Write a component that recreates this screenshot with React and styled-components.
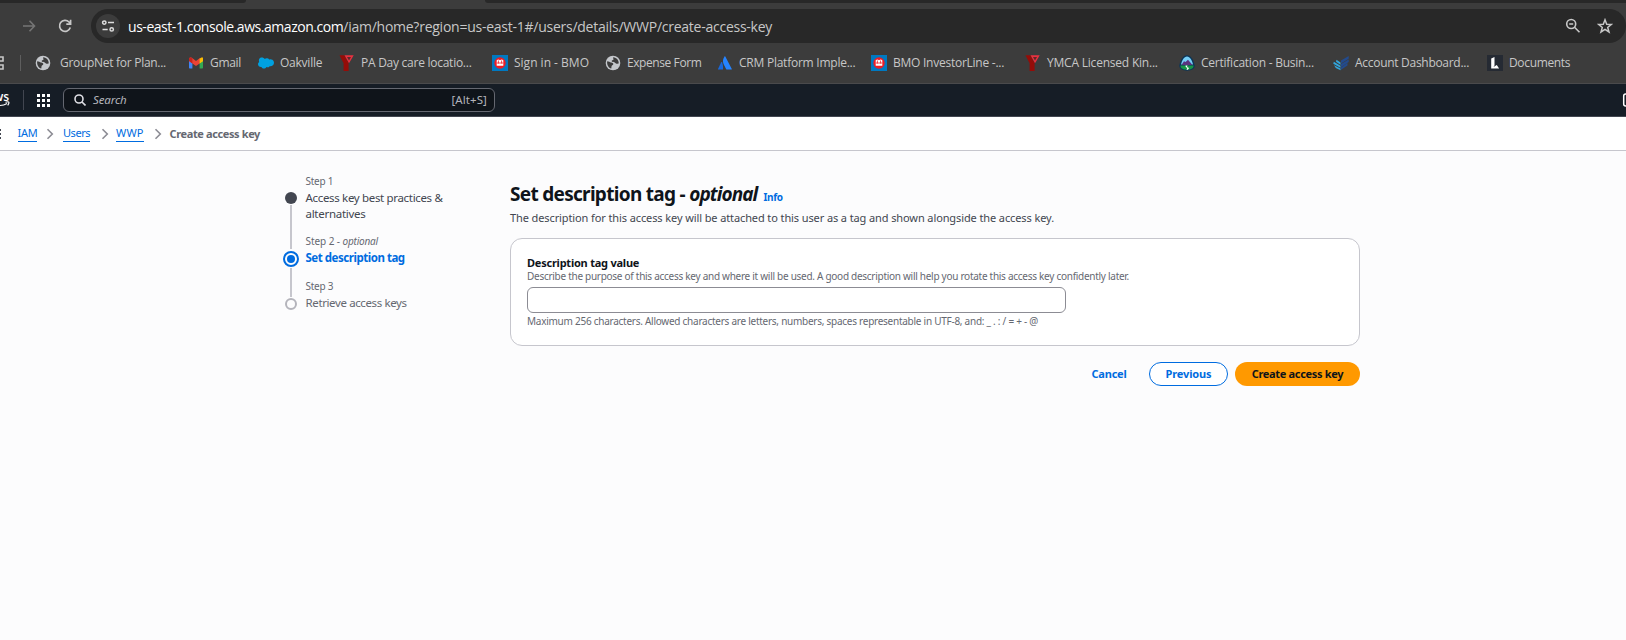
import React from "react";
import styled, { createGlobalStyle } from "styled-components";

const Global = createGlobalStyle`
  *{box-sizing:border-box}
  html,body{margin:0;padding:0;background:#fcfcfd}
  body{font-family:"Noto Sans","Open Sans",sans-serif;overflow:hidden}
  svg{display:block;flex:none}
`;
const Page = styled.div`width:1626px;height:640px;background:#fcfcfd;overflow:hidden;`;
const Text = styled.span`
  font-family:${p => p.$ui ? '"Open Sans",sans-serif' : '"Noto Sans",sans-serif'};
  font-size:${p => p.$size || 12}px;line-height:${p => p.$lh || 16}px;
  font-weight:${p => p.$weight || 400};font-style:${p => p.$italic ? "italic" : "normal"};
  color:${p => p.$color || "inherit"};letter-spacing:${p => p.$ls || 0}px;white-space:pre;
`;
const Chrome = styled.header`height:84px;background:#3c3c3c;border-bottom:1px solid #4a4a4c;overflow:hidden;`;
const Tabs = styled.div`height:3px;display:flex;justify-content:space-between;`;
const TabGap = styled.div`width:${p => p.$w}px;background:#282828;border-radius:${p => p.$r};`;
const Toolbar = styled.div`height:46px;display:flex;align-items:center;padding-left:21px;`;
const ToolIcon = styled.div`width:16px;margin-right:${p => p.$mr}px;`;
const Omnibox = styled.div`flex:1;height:34px;border-radius:17px;background:#282828;display:flex;align-items:center;padding:0 13px 0 5px;`;
const SiteInfo = styled.div`width:24px;height:24px;border-radius:50%;background:#3c3c3c;display:grid;place-items:center;margin-right:8px;`;
const Url = styled.div`flex:1;display:flex;color:#c7c7c7;padding-top:1px;`;
const OmniIcons = styled.div`display:flex;gap:16px;align-items:center;`;
const Bookmarks = styled.nav`height:28px;display:flex;align-items:center;color:#c7c7c7;`;
const Folder = styled.div`width:20px;`;
const BarRule = styled.div`width:1px;height:16px;background:#5e5e5e;margin-right:14px;`;
const Bookmark = styled.div`width:${p => p.$w}px;flex:none;display:flex;align-items:center;gap:${p => p.$gap || 6}px;`;

const Nav = styled.div`height:33px;background:#161d26;border-bottom:1px solid #424650;display:flex;align-items:center;`;
const Logo = styled.div`width:23px;`;
const NavRule = styled.div`width:1px;height:20px;background:#424650;margin-right:13px;`;
const Search = styled.div`width:432px;height:24px;margin-left:13px;border:1px solid #656871;border-radius:6px;background:#0f141a;display:flex;align-items:center;padding:0 7px 0 10px;color:#b4b4bb;`;
const SearchHint = styled.div`flex:1;padding-left:7px;display:flex;`;
const NavEnd = styled.div`margin-left:auto;`;

const Crumbs = styled.nav`height:34px;background:#fff;border-bottom:1px solid #c6c6cd;display:flex;align-items:center;`;
const Crumb = styled.a`width:${p => p.$w}px;flex:none;display:flex;`;
const CrumbText = styled(Text)`border-bottom:${p => p.$link ? "1px solid #006ce0" : "0"};`;
const MenuStub = styled.div`width:17.5px;`;

const Body = styled.main`display:flex;padding:22px 0 0 283px;`;
const Steps = styled.ol`width:227px;flex:none;margin:0;padding:0;list-style:none;`;
const Step = styled.li`display:flex;height:${p => p.$h}px;`;
const Track = styled.div`width:16px;flex:none;margin-right:6.5px;display:flex;flex-direction:column;align-items:center;padding-top:${p => p.$top}px;`;
const Dot = styled.i`
  flex:none;border-radius:50%;width:${p => p.$s}px;height:${p => p.$s}px;
  border:${p => p.$border || "0"};background:${p => p.$bg || "transparent"};
  display:grid;place-items:center;
`;
const Line = styled.i`flex:none;width:2px;height:${p => p.$h}px;background:#c6c6cd;margin-top:1px;`;
const StepText = styled.div`display:flex;flex-direction:column;align-items:flex-start;`;
const StepLabel = styled.div`height:17px;display:flex;align-items:baseline;`;

const Content = styled.section`width:850px;`;
const Heading = styled.h1`margin:0;height:37px;padding-top:8px;display:flex;align-items:baseline;color:#0f141a;`;
const Info = styled.a`margin-left:6px;display:flex;`;
const Lead = styled.p`margin:0;height:28px;display:flex;`;
const Card = styled.div`height:108px;border:1px solid #c6c6cd;border-radius:12px;background:#fff;padding:16px 16px;display:flex;flex-direction:column;align-items:flex-start;`;
const Input = styled.input`width:539px;height:26px;flex:none;border:1px solid #8c8c94;border-radius:6px;background:#fff;margin:4px 0 0;display:block;outline:0;`;
const Actions = styled.div`display:flex;justify-content:flex-end;align-items:center;margin-top:16px;gap:7px;`;
const Button = styled.button`
  width:${p => p.$w}px;height:24px;border-radius:12px;padding:0;display:flex;align-items:center;justify-content:center;
  margin-right:${p => p.$mr || 0}px;
  background:${p => p.$primary ? "#ff9900" : p.$outline ? "#fff" : "transparent"};
  border:${p => p.$outline ? "1px solid #006ce0" : "0"};color:${p => p.$primary ? "#0f141a" : "#006ce0"};
`;

const Globe = () => <svg width="16" height="16" viewBox="0 0 16 16"><circle cx="8" cy="8" r="7.300" fill="#c4c7cb"/><path d="M2.200 6.300c1.800 0 2.600 1 3.800 1.200 1.800.1 2.700.9 2.200 2.100-.4.900-1.500.7-1.700 1.900l-.2 2C3.700 13 1.600 10 2.200 6.300zM8.200 2.300c-.5 1 .6 1.500.3 2.300-.4 1-2 .5-1.800 1.600.3 1.200 1.900.2 3 1.300 1 1 2.200 1.500 4 1.100.3-3.400-2-6-5.500-6.300z" fill="#3c3c3c"/></svg>;
const Gmail = () => <svg width="16" height="16" viewBox="0 0 16 16"><path d="M1 5v7.500c0 .6.4 1 1 1h2.400V7.300z" fill="#4285f4"/><path d="M15 5v7.500c0 .6-.4 1-1 1h-2.400V7.300z" fill="#34a853"/><path d="M11.600 3.700 15 2.600V6l-3.400 2.600z" fill="#fbbc04"/><path d="M1 6V4c0-1.600 1.700-2 2.800-1.200L8 6l4.200-3.200-.6 5.600L8 11 4.400 8.400z" fill="#ea4335"/><path d="M1 6V4c0-1 .8-1.600 1.700-1.500l1.700 1v4.900z" fill="#c5221f"/><path d="M11.600 4 13 2.700c.9-.6 2 0 2 1.300v2l-3.400 2.500z" fill="#fbbc04"/></svg>;
const Cloud = () => <svg width="16" height="16" viewBox="0 0 16 16"><path d="M6.700 4a3 3 0 0 1 4.500.4A3.600 3.600 0 0 1 16 7.700c0 2.500-2.300 4-4.400 3.500-.8 1.400-2.300 1.300-3.200.9-1 2-4 2-4.900 0C1.500 12.300 0 11 0 9.300c0-1 .5-1.800 1.200-2.300C.3 4.400 1.700 2.500 3.800 2.500c1.300 0 2.200.5 2.900 1.500z" fill="#00a1e0"/></svg>;
const Ymca = () => <svg width="16" height="16" viewBox="0 0 16 16"><path d="M.5.3h5l2.700 5.500 1.400 2V16h-5V8.300z" fill="#950c08"/><path d="M5.500.3h9.200L10 8.300z" fill="#e8313f"/><path d="M8 2h4l-2 3.500z" fill="#5b2a2c"/></svg>;
const Bmo = () => <svg width="16" height="16" viewBox="0 0 16 16"><path d="M0 0h16v16H0z" fill="#0079c1"/><circle cx="8" cy="8" r="5.700" fill="#ed1c24"/><path d="M4.700 5.200q1.500-1.200 3.300 0 1.800-1.200 3.300 0v5.600H4.700z" fill="#fff"/><path d="M4.700 8h6.600M6.400 5.500v3M9.600 5.500v3" stroke="#ed1c24" strokeWidth=".8"/></svg>;
const Atlassian = () => <svg width="16" height="16" viewBox="0 0 16 16"><path d="M5 7.300c-.3-.3-.6-.3-.8 0L1 14c-.1.300 0 .6.400.6h4.600c.3-1.800 0-5-1-7.300z" fill="#1868db"/><path d="M7.500 1.500c-2 3-1.900 5.600-.6 8.200l2.300 4.500c.1.300.3.400.6.400h4.600c.4 0 .5-.3.400-.6L8.300 1.500c-.2-.4-.6-.4-.8 0z" fill="#2684ff"/></svg>;
const Trail = () => <svg width="16" height="16" viewBox="0 0 16 16"><path d="M8 .3c4 0 6.400 4.500 7.600 9.600.7 3-2.200 5.800-7.600 5.800S-.3 13 .4 9.900C1.600 4.800 4 .3 8 .3z" fill="#0b3558"/><path d="M8 1.500c3 0 5.100 4 6 8H2c.9-4 3-8 6-8z" fill="#75cdf5"/><path d="m2.500 10 2.500-3.700L6.500 7 9 4.800 13.500 10z" fill="#5a327f"/><path d="M1.500 10.500h13c.4 2.400-2.200 4.200-6.500 4.200s-6.900-1.800-6.500-4.200z" fill="#179647"/><path d="M6.500 10.500h2l-.5 1.500 2 1-1 1.700H7.500l.8-1.700-1.500-1z" fill="#fff"/></svg>;
const Account = () => <svg width="16" height="16" viewBox="0 0 16 16"><path d="M8 5.500 15.700 1v2.700L8 8.500zM8 9l7.700-4.500V7L8 12zM8 12.500 14.500 8v2.500L8 14.800z" fill="#234b8d"/><path d="M3.500 4.800 7.500 7.500v2.200L3 6.800zM.8 6.800l6.700 4v2L.3 8.800zM1 10.200l6.500 3.200v1.900L2.800 13z" fill="#32a5dc"/></svg>;
const Docs = () => <svg width="16" height="16" viewBox="0 0 16 16"><path d="M0 0h16v16H0z" fill="#252a33"/><path d="M4.200 3.500 7.500 2v8.500l-1 1.500 3.300-2 2.300 3.500H4.200z" fill="#fff"/></svg>;

/* label, icon, slot width, letter spacing, icon gap */
const bookmarks = [
  ["GroupNet for Plan...", Globe, 153, -0.29, 9], ["Gmail", Gmail, 70, -0.3], ["Oakville", Cloud, 81, -0.24], ["PA Day care locatio...", Ymca, 153, -0.26],
  ["Sign in - BMO", Bmo, 113, 0], ["Expense Form", Globe, 112, -0.42], ["CRM Platform Imple...", Atlassian, 154, -0.24], ["BMO InvestorLine -...", Bmo, 154, -0.25],
  ["YMCA Licensed Kin...", Ymca, 154, -0.21], ["Certification - Busin...", Trail, 154, -0.24], ["Account Dashboard...", Account, 154, -0.29], ["Documents", Docs, 100, -0.34],
];
const Chevron = () => <svg width="8" height="12" viewBox="0 0 8 12"><path d="m1.500 1.200 4.800 4.800-4.800 4.800" fill="none" stroke="#8c8c94" strokeWidth="1.600"/></svg>;

export default function App() {
  return <Page><Global/>
    <Chrome>
      <Tabs><TabGap $w={246} $r="0 0 6px 0"/><TabGap $w={1141} $r="0 0 0 6px"/></Tabs>
      <Toolbar>
        <ToolIcon $mr={20}><svg width="16" height="16" viewBox="0 0 16 16"><path d="M2 8h11M8.500 2.800 13.500 8l-5 5.200" fill="none" stroke="#757575" strokeWidth="1.600"/></svg></ToolIcon>
        <ToolIcon $mr={18}><svg width="16" height="16" viewBox="0 0 16 16"><path d="M13.300 9.500A5.500 5.500 0 1 1 12 4l1.500 1.700M13.600 1.800v4.300H9.300" fill="none" stroke="#c7c7c7" strokeWidth="1.700"/></svg></ToolIcon>
        <Omnibox>
          <SiteInfo><svg width="14" height="14" viewBox="0 0 14 14" fill="none" stroke="#dedede" strokeWidth="1.500"><circle cx="3.300" cy="3.600" r="1.700"/><path d="M7 3.600h6M1.500 10.400h5.200"/><circle cx="10.700" cy="10.400" r="1.700"/></svg></SiteInfo>
          <Url><Text $ui $size={14} $lh={20} $color="#fff" $ls={-0.46}>us-east-1.console.aws.amazon.com</Text><Text $ui $size={14} $lh={20} $ls={-0.25}>/iam/home?region=us-east-1#/users/details/WWP/create-access-key</Text></Url>
          <OmniIcons>
            <svg width="16" height="16" viewBox="0 0 16 16" fill="none" stroke="#c7c7c7" strokeWidth="1.600"><circle cx="6.200" cy="6" r="4.500"/><path d="m9.500 9.300 5 5M4.200 6h4"/></svg>
            <svg width="16" height="16" viewBox="0 0 16 16"><path d="m8 1.800 1.700 4.400 4.700.2-3.700 3 1.300 4.600-4-2.600L4 14l1.300-4.600-3.700-3 4.700-.2z" fill="none" stroke="#c7c7c7" strokeWidth="1.500"/></svg>
          </OmniIcons>
        </Omnibox>
      </Toolbar>
      <Bookmarks>
        <Folder><svg width="5" height="14" viewBox="0 0 5 14"><path d="M0 1h3v4H0M0 9h3v4H0" fill="none" stroke="#c7c7c7" strokeWidth="1.600"/></svg></Folder>
        <BarRule/>
        {bookmarks.map(([label, Icon, width, spacing, gap]) => <Bookmark key={label} $w={width} $gap={gap}><Icon/><Text $ui $size={12} $ls={spacing}>{label}</Text></Bookmark>)}
      </Bookmarks>
    </Chrome>
    <Nav>
      <Logo><svg width="12" height="20" viewBox="0 0 12 20"><text x="-6.500" y="10.500" fontSize="12" fontWeight="600" fontFamily="Open Sans" fill="#fff">ws</text><path d="M0 15.500c3 0 5-.7 7-2M5.500 12.300c2-.6 3.200-.6 3.400 0 .2.700-.4 2-1.200 3" fill="none" stroke="#fff" strokeWidth="1.200"/></svg></Logo>
      <NavRule/>
      <svg width="13" height="13" viewBox="0 0 13 13" fill="#fff">{[0, 5, 10].map(y => [0, 5, 10].map(x => <rect key={x + "-" + y} x={x} y={y} width="3" height="3"/>))}</svg>
      <Search>
        <svg width="12" height="12" viewBox="0 0 12 12" fill="none" stroke="#dedee3" strokeWidth="1.600"><circle cx="5" cy="5" r="4"/><path d="m8 8 3.500 3.500"/></svg>
        <SearchHint><Text $italic $size={11.500} $ls={-0.13}>Search</Text></SearchHint>
        <Text $size={11.500} $ls={0.08}>[Alt+S]</Text>
      </Search>
      <NavEnd><svg width="4" height="14" viewBox="0 0 4 14"><rect x="1.700" y="1" width="10" height="12" rx="2" fill="none" stroke="#fff" strokeWidth="1.500"/></svg></NavEnd>
    </Nav>
    <Crumbs>
      <MenuStub><svg width="2" height="12" viewBox="0 0 2 12"><path d="M0 2h1M0 6h1M0 10h1" stroke="#424650" strokeWidth="2"/></svg></MenuStub>
      <Crumb $w={28.5}><CrumbText $link $size={11} $color="#006ce0" $ls={-0.3}>IAM</CrumbText></Crumb><Crumb $w={17}><Chevron/></Crumb>
      <Crumb $w={37.5}><CrumbText $link $size={11} $color="#006ce0" $ls={-0.45}>Users</CrumbText></Crumb><Crumb $w={15.5}><Chevron/></Crumb>
      <Crumb $w={37.5}><CrumbText $link $size={11} $color="#006ce0" $ls={0.2}>WWP</CrumbText></Crumb><Crumb $w={16}><Chevron/></Crumb>
      <CrumbText $size={11} $weight={700} $color="#656871" $ls={-0.38}>Create access key</CrumbText>
    </Crumbs>
    <Body>
      <Steps>
        <Step $h={60}><Track $top={19}><Dot $s={12} $bg="#424650"/><Line $h={44}/></Track><StepText>
          <StepLabel><Text $size={10} $color="#656871" $ls={-0.25}>Step 1</Text></StepLabel><Text $size={11.500} $color="#424650" $ls={-0.33}>Access key best practices &amp;</Text><Text $size={11.500} $color="#424650" $ls={-0.28}>alternatives</Text></StepText></Step>
        <Step $h={45}><Track $top={18}><Dot $s={16} $border="2px solid #006ce0"><Dot $s={8} $bg="#006ce0"/></Dot><Line $h={29}/></Track><StepText>
          <StepLabel><Text $size={10} $color="#656871" $ls={-0.07}>{"Step 2 - "}</Text><Text $size={10} $italic $color="#656871" $ls={-0.2}>optional</Text></StepLabel><Text $size={11.500} $weight={700} $color="#006ce0" $ls={-0.47}>Set description tag</Text></StepText></Step>
        <Step $h={45}><Track $top={20}><Dot $s={12} $border="2px solid #b4b4bb"/></Track><StepText>
          <StepLabel><Text $size={10} $color="#656871" $ls={-0.25}>Step 3</Text></StepLabel><Text $size={11.500} $color="#656871" $ls={-0.38}>Retrieve access keys</Text></StepText></Step>
      </Steps>
      <Content>
        <Heading><Text $size={19} $lh={26} $weight={700} $ls={-0.7}>{"Set description tag - "}</Text><Text $size={19} $lh={26} $weight={700} $italic $ls={-0.9}>optional</Text><Info><Text $size={10} $weight={700} $color="#006ce0" $ls={-0.3}>Info</Text></Info></Heading>
        <Lead><Text $size={11} $color="#424650" $ls={-0.107}>The description for this access key will be attached to this user as a tag and shown alongside the access key.</Text></Lead>
        <Card>
          <Text $size={11} $lh={15} $weight={700} $color="#0f141a" $ls={-0.23}>Description tag value</Text>
          <Text $size={10} $lh={13} $color="#656871" $ls={-0.276}>Describe the purpose of this access key and where it will be used. A good description will help you rotate this access key confidently later.</Text>
          <Input/>
          <Text $size={10} $color="#656871" $ls={-0.258}>Maximum 256 characters. Allowed characters are letters, numbers, spaces representable in UTF-8, and: _ . : / = + - @</Text>
        </Card>
        <Actions>
          <Button $w={66}><Text $size={11} $weight={700} $ls={-0.2}>Cancel</Text></Button>
          <Button $w={79} $outline><Text $size={11} $weight={700} $ls={-0.12}>Previous</Text></Button>
          <Button $w={125} $primary><Text $size={11} $weight={700} $ls={-0.32}>Create access key</Text></Button>
        </Actions>
      </Content>
    </Body>
  </Page>;
}
